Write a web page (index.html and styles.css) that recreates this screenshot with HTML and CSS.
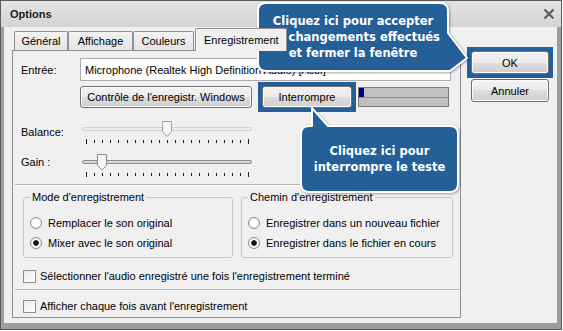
FILE: index.html
```html
<!DOCTYPE html>
<html lang="fr">
<head>
<meta charset="utf-8">
<title>Options</title>
<link rel="stylesheet" href="styles.css">
</head>
<body>
<div class="window">
  <div class="titlebar">
    <span class="title">Options</span>
    <svg class="close" width="12" height="12" viewBox="0 0 12 12"><path d="M1.5 1.5L10.5 10.5M10.5 1.5L1.5 10.5" stroke="#5a5a5a" stroke-width="2"/></svg>
  </div>
  <div class="client">
    <div class="tabctl">
      <div class="tabstrip">
        <div class="tab t1">Général</div>
        <div class="tab t2">Affichage</div>
        <div class="tab t3">Couleurs</div>
        <div class="tab active">Enregistrement</div>
      </div>
      <div class="panel">
        <div class="row entry">
          <span class="lbl">Entrée:</span>
          <div class="input">Microphone (Realtek High Definition Audio) [Actif]</div>
        </div>
        <div class="row ctrls">
          <button class="btn b-ctrl">Contrôle de l'enregistr. Windows</button>
          <span class="hl hl-stop"><button class="btn b-stop">Interrompre</button></span>
          <div class="meter"><div class="lvl"><span class="peak"></span></div><div class="lvl"></div></div>
        </div>
        <div class="srow bal">
          <span class="lbl">Balance:</span>
          <svg class="slider" width="172" height="26" viewBox="0 0 172 26">
            <rect x="0.5" y="8.5" width="169" height="3" rx="1.5" fill="#ededed" stroke="#d0d0d0"/>
            <path d="M4.5 20v5M12.5 21v3M20.5 21v3M28.5 21v3M36.5 21v3M45.5 21v3M53.5 21v3M61.5 21v3M69.5 21v3M77.5 21v3M85.5 21v3M93.5 21v3M101.5 21v3M109.5 21v3M117.5 21v3M126.5 21v3M134.5 21v3M142.5 21v3M150.5 21v3M158.5 21v3M166.5 20v5" stroke="#222"/>
            <path d="M80.5 2.5h9v10l-4.5 5l-4.5-5z" fill="#f6f6f6" stroke="#a0a0a0"/>
          </svg>
        </div>
        <div class="srow gain">
          <span class="lbl">Gain :</span>
          <svg class="slider" width="172" height="26" viewBox="0 0 172 26">
            <rect x="0.5" y="8.5" width="169" height="3" rx="1.5" fill="#d6d6d6" stroke="#8c8c8c"/>
            <path d="M4.5 20v5M12.5 21v3M20.5 21v3M28.5 21v3M36.5 21v3M45.5 21v3M53.5 21v3M61.5 21v3M69.5 21v3M77.5 21v3M85.5 21v3M93.5 21v3M101.5 21v3M109.5 21v3M117.5 21v3M126.5 21v3M134.5 21v3M142.5 21v3M150.5 21v3M158.5 21v3M166.5 20v5" stroke="#222"/>
            <path d="M15.5 2.5h9v11l-4.5 4.5l-4.5-4.5z" fill="#f6f6f6" stroke="#8a8a8a"/>
          </svg>
        </div>
        <div class="sep sep1"></div>
        <div class="groups">
          <fieldset class="group g1">
            <legend>Mode d'enregistrement</legend>
            <div class="opt"><span class="radio"></span>Remplacer le son original</div>
            <div class="opt"><span class="radio on"></span>Mixer avec le son original</div>
          </fieldset>
          <fieldset class="group g2">
            <legend>Chemin d'enregistrement</legend>
            <div class="opt"><span class="radio"></span>Enregistrer dans un nouveau fichier</div>
            <div class="opt"><span class="radio on"></span>Enregistrer dans le fichier en cours</div>
          </fieldset>
        </div>
        <div class="opt chk chk1"><span class="check"></span>Sélectionner l'audio enregistré une fois l'enregistrement terminé</div>
        <div class="sep sep2"></div>
        <div class="opt chk chk2"><span class="check"></span>Afficher chaque fois avant l'enregistrement</div>
      </div>
    </div>
    <div class="side">
      <span class="hl"><button class="btn">OK</button></span>
      <button class="btn">Annuler</button>
    </div>
  </div>
</div>

<div class="callout c1">
  <svg class="bubble" width="214" height="72" viewBox="0 0 214 72"><path d="M10 2H184Q192 2 192 10V32L211 57L194 70H10Q2 70 2 62V10Q2 2 10 2Z" fill="#245f98" stroke="#fff" stroke-width="2" stroke-linejoin="round"/></svg>
  <div class="ctext"><span>Cliquez ici pour accepter</span><span>les changements effectués</span><span>et fermer la fenêtre</span></div>
</div>
<div class="callout c2">
  <svg class="bubble" width="162" height="89" viewBox="0 0 162 89"><path d="M10 20H13V2L29 20H151Q159 20 159 28V78Q159 86 151 86H10Q2 86 2 78V28Q2 20 10 20Z" fill="#245f98" stroke="#fff" stroke-width="2" stroke-linejoin="round"/></svg>
  <div class="ctext"><span>Cliquez ici pour</span><span>interrompre le teste</span></div>
</div>
</body>
</html>
```
FILE: styles.css
```css
* { box-sizing: border-box; }
html, body { margin: 0; padding: 0; }
body {
  position: relative;
  width: 563px;
  height: 331px;
  overflow: hidden;
  background: #ffffff;
  font-family: "Liberation Sans", Arial, sans-serif;
  font-size: 11px;
  color: #000;
}
.window {
  width: 562px;
  height: 330px;
  border: 1px solid #5c5c5c;
  background: #9d9d9d;
  display: flex;
  flex-direction: column;
}
.titlebar {
  height: 26px;
  flex: none;
  display: flex;
  align-items: center;
  padding: 0 6px 0 9px;
  background: linear-gradient(#e4e4e4, #d3d3d3);
}
.title { font-weight: bold; font-size: 11px; color: #1b1b1b; }
.close { margin-left: auto; display: block; }
.client {
  flex: 1;
  margin: 0 4px 6px 3px;
  background: #f0f0f0;
  display: flex;
  padding: 1px 0 0 8px;
}
.tabctl { width: 449px; display: flex; flex-direction: column; flex: none; }
.tabstrip { height: 22px; display: flex; align-items: flex-end; padding-left: 2px; }
.tab {
  height: 19px;
  border: 1px solid #8e9199;
  border-bottom: none;
  border-radius: 2px 2px 0 0;
  background: linear-gradient(#f4f4f4, #e2e2e2);
  display: flex;
  align-items: center;
  justify-content: center;
  white-space: nowrap;
}
.t1 { width: 54px; }
.t2 { width: 65px; }
.t3 { width: 61px; }
.tab.active {
  height: 23px;
  margin-bottom: -1px;
  margin-left: 1px;
  width: 92px;
  background: #f0f0f0;
  justify-content: flex-start;
  padding-left: 8px;
  position: relative;
  z-index: 1;
}
.panel {
  height: 268px;
  border: 1px solid #8e9199;
  background: #f0f0f0;
  padding: 7px 0 0 8px;
  display: flex;
  flex-direction: column;
}
.row { display: flex; align-items: center; }
.entry { height: 23px; }
.lbl { width: 59px; flex: none; }
.input {
  width: 371px;
  height: 23px;
  border: 1px solid #abadb3;
  background: #fff;
  padding-left: 4px;
  display: flex;
  align-items: center;
  white-space: nowrap;
  overflow: hidden;
}
.ctrls { height: 22px; margin-top: 5px; padding-left: 59px; }
.btn {
  font: inherit;
  color: #000;
  height: 22px;
  padding: 0;
  border: 1px solid #707070;
  border-radius: 3px;
  background: linear-gradient(#f2f2f2 0, #ebebeb 50%, #dddddd 50%, #cfcfcf 100%);
  box-shadow: inset 0 0 0 1px #fbfbfb;
  white-space: nowrap;
}
.b-ctrl { width: 172px; }
.hl { display: inline-flex; padding: 4px; margin: -4px; background: #245f98; }
.hl-stop { margin-left: 6px; margin-right: 2px; }
.b-stop { width: 90px; }
.meter {
  width: 91px;
  height: 20px;
  border: 1px solid #7a7a7a;
  background: #c0c0c0;
  display: flex;
  flex-direction: column;
}
.lvl { flex: 1; display: flex; }
.lvl + .lvl { border-top: 1px solid #8a8a8a; }
.peak { width: 5px; background: #000080; }
.srow { display: flex; align-items: flex-start; height: 26px; }
.srow .lbl { width: 61px; line-height: 13px; }
.slider { display: block; }
.bal { margin-top: 11px; }
.bal .lbl { padding-top: 7px; }
.gain { margin-top: 7px; }
.gain .lbl { padding-top: 4px; }
.sep { height: 1px; background: #b4b4b4; box-shadow: 0 1px 0 #fff; margin-right: 2px; margin-left: -6px; }
.sep1 { margin-top: 6px; }
.sep2 { margin-top: 3px; margin-right: 0; }
.groups { display: flex; gap: 8px; margin: 6px 0 0 2px; }
.group {
  margin: 0;
  border: 1px solid #c6c6c6;
  border-radius: 3px;
  padding: 9px 0 4px 6px;
  min-width: 0;
}
.g1 { width: 210px; }
.g2 { width: 212px; }
.group legend { padding: 0 2px; line-height: 13px; }
.opt { display: flex; align-items: center; height: 20px; white-space: nowrap; }
.radio {
  width: 12px;
  height: 12px;
  flex: none;
  margin-right: 6px;
  border-radius: 50%;
  border: 1px solid #8c8c8c;
  background: radial-gradient(circle, #ffffff 0 3px, #ececec 6px);
}
.radio.on { background: radial-gradient(circle, #111 0 2.4px, #ffffff 3.2px, #ececec 6px); }
.chk { margin-left: 2px; }
.chk1 { margin-top: 8px; }
.chk2 { margin-top: 6px; }
.check {
  width: 13px;
  height: 13px;
  flex: none;
  margin-right: 4px;
  border: 1px solid #8e8f8f;
  background: linear-gradient(135deg, #ececec, #ffffff);
}
.side {
  width: 78px;
  margin-left: 10px;
  padding-top: 23px;
  display: flex;
  flex-direction: column;
  align-items: flex-start;
  gap: 5px;
}
.side .btn { width: 78px; height: 23px; }
.callout { position: absolute; }
.bubble { position: absolute; left: 0; top: 0; filter: drop-shadow(1px 1px 1px rgba(0,0,0,0.35)); }
.c1 { left: 256px; top: 1px; width: 214px; height: 72px; }
.c2 { left: 299px; top: 106px; width: 162px; height: 89px; }
.ctext {
  position: relative;
  display: flex;
  flex-direction: column;
  align-items: center;
  justify-content: center;
  font-family: "DejaVu Sans", sans-serif;
  font-weight: bold;
  font-size: 11.5px;
  line-height: 16px;
  color: #fff;
  text-align: center;
  white-space: nowrap;
}
.c1 .ctext { margin: 2px 0 0 2px; width: 190px; height: 68px; }
.c2 .ctext { margin: 20px 0 0 2px; width: 157px; height: 66px; }
```
